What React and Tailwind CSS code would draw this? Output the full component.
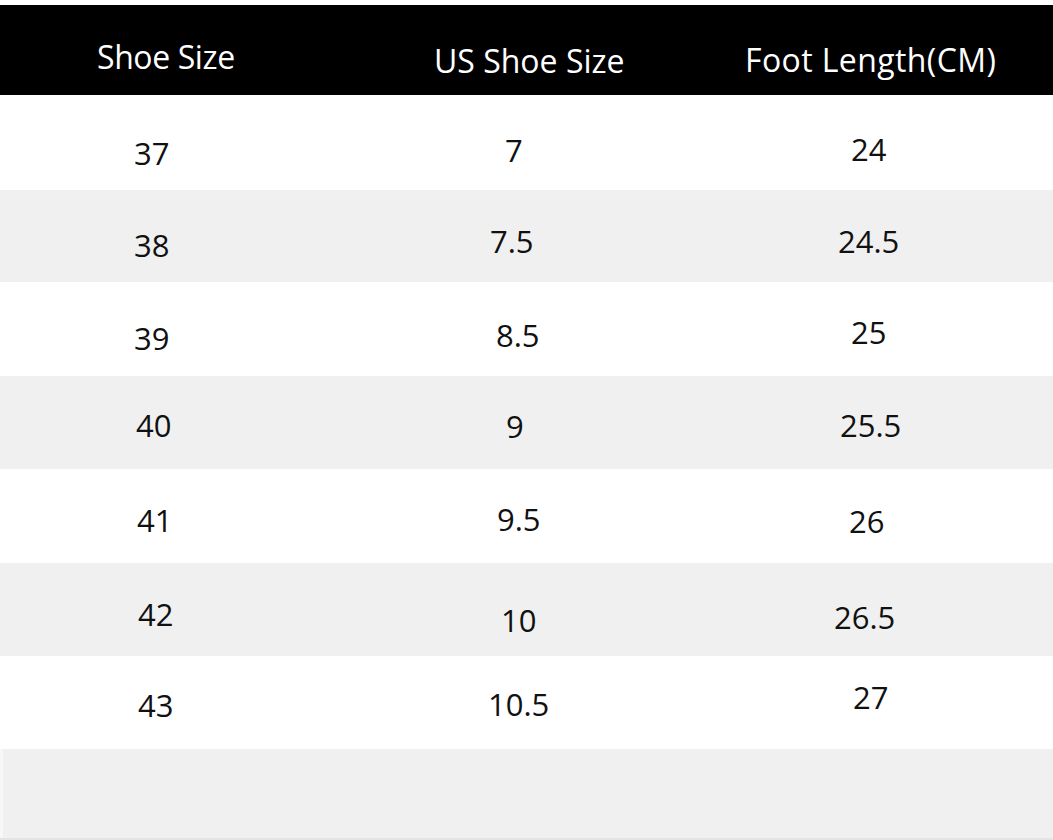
const rows = [
  {
    bg: "bg-white h-[95px]",
    cells: [
      { t: "37", c: "pl-[134px] pt-[43px]" },
      { t: "7", c: "pl-[175px] pt-[40px]" },
      { t: "24", c: "pl-[151px] pt-[39px]" },
    ],
  },
  {
    bg: "bg-[#f0f0f0] h-[92px]",
    cells: [
      { t: "38", c: "pl-[134px] pt-[40px]" },
      { t: "7.5", c: "pl-[160px] pt-[36px]" },
      { t: "24.5", c: "pl-[138px] pt-[36px]" },
    ],
  },
  {
    bg: "bg-white h-[94px]",
    cells: [
      { t: "39", c: "pl-[134px] pt-[41px]" },
      { t: "8.5", c: "pl-[166px] pt-[38px]" },
      { t: "25", c: "pl-[151px] pt-[35px]" },
    ],
  },
  {
    bg: "bg-[#f0f0f0] h-[93px]",
    cells: [
      { t: "40", c: "pl-[136px] pt-[34px]" },
      { t: "9", c: "pl-[176px] pt-[35px]" },
      { t: "25.5", c: "pl-[140px] pt-[34px]" },
    ],
  },
  {
    bg: "bg-white h-[94px]",
    cells: [
      { t: "41", c: "pl-[137px] pt-[36px]" },
      { t: "9.5", c: "pl-[167px] pt-[35px]" },
      { t: "26", c: "pl-[149px] pt-[37px]" },
    ],
  },
  {
    bg: "bg-[#f0f0f0] h-[93px]",
    cells: [
      { t: "42", c: "pl-[138px] pt-[36px]" },
      { t: "10", c: "pl-[171px] pt-[42px]" },
      { t: "26.5", c: "pl-[134px] pt-[39px]" },
    ],
  },
  {
    bg: "bg-white h-[93px]",
    cells: [
      { t: "43", c: "pl-[138px] pt-[34px]" },
      { t: "10.5", c: "pl-[158px] pt-[33px]" },
      { t: "27", c: "pl-[153px] pt-[26px]" },
    ],
  },
];

const colWidths = ["w-[330px]", "w-[370px]", "flex-1"];

export default function App() {
  return (
    <div
      className="w-[1053px] h-[840px] bg-white overflow-hidden text-[#111]"
      style={{ fontFamily: '"Open Sans", "Noto Sans", sans-serif' }}
    >
      <div className="h-[5px] bg-white" />
      {/* header */}
      <div className="h-[90px] bg-black text-white text-[32px] flex">
        <div className="w-[330px] pl-[97px] pt-[36px] leading-none tracking-[-0.4px]">Shoe Size</div>
        <div className="w-[370px] pl-[104px] pt-[40px] leading-none">US Shoe Size</div>
        <div className="flex-1 pl-[45px] pt-[39px] leading-none tracking-[0.4px]">Foot Length(CM)</div>
      </div>

      {rows.map((row, i) => (
        <div key={i} className={`flex text-[31px] ${row.bg}`}>
          {row.cells.map((cell, j) => (
            <div key={j} className={`${colWidths[j]} ${cell.c} leading-none`}>
              {cell.t}
            </div>
          ))}
        </div>
      ))}

      <div className="h-[89px] bg-[#f0f0f0] border-l-[3px] border-[#f7f7f7]" />
      <div className="h-[2px] bg-[#e4e4e4]" />
    </div>
  );
}
